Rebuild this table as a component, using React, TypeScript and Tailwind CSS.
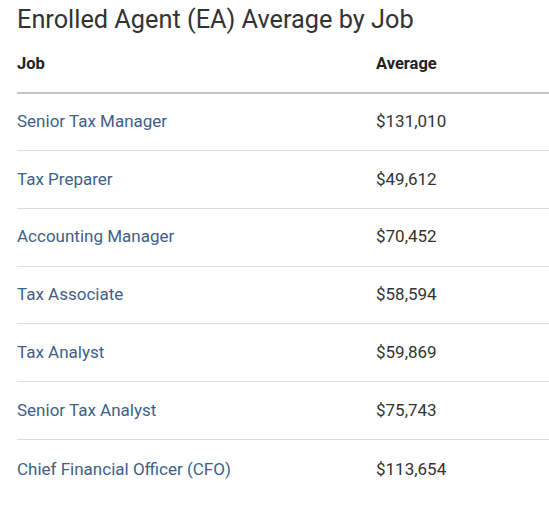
const rows = [
  { job: "Senior Tax Manager", avg: "$131,010" },
  { job: "Tax Preparer", avg: "$49,612" },
  { job: "Accounting Manager", avg: "$70,452" },
  { job: "Tax Associate", avg: "$58,594" },
  { job: "Tax Analyst", avg: "$59,869" },
  { job: "Senior Tax Analyst", avg: "$75,743" },
  { job: "Chief Financial Officer (CFO)", avg: "$113,654" },
];

export default function App() {
  return (
    <div className="bg-white min-h-screen pl-[17px] font-['Roboto',sans-serif] overflow-hidden">
      <h1 className="text-[25.3px] leading-[28px] text-[#333] pt-[6px] whitespace-nowrap">
        Enrolled Agent (EA) Average by Job
      </h1>

      <table className="w-[560px] border-collapse">
        <thead>
          <tr className="border-b-2 border-[#c4c4c4]">
            <th className="text-left text-[16.5px] font-bold text-[#222] w-[359px] h-[59px] align-top pt-[18px]">
              Job
            </th>
            <th className="text-left text-[16.5px] font-bold text-[#222] align-top pt-[18px]">
              Average
            </th>
          </tr>
        </thead>
        <tbody>
          {rows.map((r, i) => (
            <tr
              key={r.job}
              className={i < rows.length - 1 ? "border-b border-[#dcdcdc] h-[57.7px]" : "h-[61px]"}
            >
              <td className="text-[17px] text-[#3e5f8a] whitespace-nowrap">{r.job}</td>
              <td className="text-[17px] text-[#333]">{r.avg}</td>
            </tr>
          ))}
        </tbody>
      </table>
    </div>
  );
}
